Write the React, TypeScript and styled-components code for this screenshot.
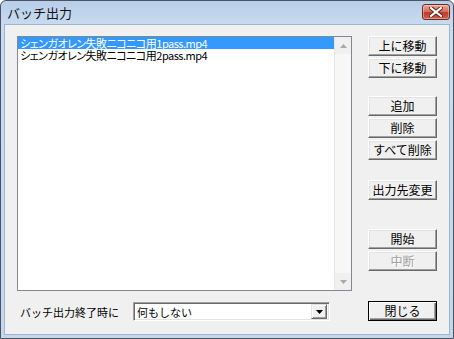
import styled, { createGlobalStyle, css } from "styled-components";

const GlobalStyle = createGlobalStyle`
  html, body {
    margin: 0;
    padding: 0;
    background: #ffffff;
  }
  * {
    box-sizing: border-box;
  }
`;

const FONT = `"Noto Sans CJK JP", "Noto Sans", sans-serif`;

const items = [
  "シェンガオレン失敗ニコニコ用1pass.mp4",
  "シェンガオレン失敗ニコニコ用2pass.mp4",
];

export default function App() {
  return (
    <>
      <GlobalStyle />
      <Window>
        <TitleBar>
          <Title>バッチ出力</Title>
          <CloseButton>
            <svg width="14" height="10" viewBox="0 0 14 10">
              <path
                d="M2 1 L12 9 M12 1 L2 9"
                stroke="#5a1a14"
                strokeWidth="4"
                strokeLinecap="square"
              />
              <path
                d="M2 1 L12 9 M12 1 L2 9"
                stroke="#ffffff"
                strokeWidth="2.2"
                strokeLinecap="square"
              />
            </svg>
          </CloseButton>
        </TitleBar>
        <Client>
          <LeftColumn>
            <ListBox>
              <ListItems>
                {items.map((item, i) => (
                  <ListItem key={item} $selected={i === 0}>
                    {item}
                  </ListItem>
                ))}
              </ListItems>
              <ScrollBar>
                <ScrollArrow>
                  <svg width="7" height="4" viewBox="0 0 7 4">
                    <path d="M3.5 0 L7 4 L0 4 Z" fill="#a8a8a8" />
                  </svg>
                </ScrollArrow>
                <ScrollTrack />
                <ScrollArrow>
                  <svg width="7" height="4" viewBox="0 0 7 4">
                    <path d="M0 0 L7 0 L3.5 4 Z" fill="#a8a8a8" />
                  </svg>
                </ScrollArrow>
              </ScrollBar>
            </ListBox>
            <BottomRow>
              <Label>バッチ出力終了時に</Label>
              <Combo>
                <ComboText>何もしない</ComboText>
                <ComboButton>
                  <svg width="7" height="4" viewBox="0 0 7 4">
                    <path d="M0 0 L7 0 L3.5 4 Z" fill="#000" />
                  </svg>
                </ComboButton>
              </Combo>
            </BottomRow>
          </LeftColumn>
          <RightColumn>
            <Group>
              <Button>上に移動</Button>
              <Button>下に移動</Button>
            </Group>
            <Group $top={18}>
              <Button>追加</Button>
              <Button>削除</Button>
              <Button>すべて削除</Button>
            </Group>
            <Group $top={20}>
              <Button>出力先変更</Button>
            </Group>
            <Group $top={29}>
              <Button>開始</Button>
              <Button disabled>中断</Button>
            </Group>
            <Group $top={30}>
              <Button $default>閉じる</Button>
            </Group>
          </RightColumn>
        </Client>
      </Window>
    </>
  );
}

const Window = styled.div`
  width: 454px;
  height: 339px;
  display: flex;
  flex-direction: column;
  border: 1px solid #4a5360;
  border-radius: 6px 6px 0 0;
  background: linear-gradient(to bottom, #b7cee9 0px, #c9dbf0 24px, #c3d7ee 100%);
  padding: 0 3px 3px 3px;
  font-family: ${FONT};
`;

const TitleBar = styled.div`
  height: 23px;
  display: flex;
  align-items: center;
  justify-content: space-between;
  padding: 0 0 0 3px;
`;

const Title = styled.div`
  font-size: 13px;
  color: #111;
  line-height: 1;
`;

const CloseButton = styled.div`
  width: 28px;
  height: 16px;
  margin-top: -2px;
  border: 1px solid #6e2a22;
  border-radius: 3px;
  background: linear-gradient(to bottom, #e8a79b 0%, #d7735f 45%, #c0392a 55%, #d1614d 100%);
  box-shadow: inset 0 0 0 1px rgba(255, 255, 255, 0.35);
  display: flex;
  align-items: center;
  justify-content: center;
`;

const Client = styled.div`
  flex: 1;
  background: #f0f0f0;
  border: 1px solid #9fb4cf;
  display: flex;
  padding: 11px 12px 0 12px;
`;

const LeftColumn = styled.div`
  width: 335px;
  display: flex;
  flex-direction: column;
`;

const ListBox = styled.div`
  height: 255px;
  background: #fff;
  border: 1px solid #828790;
  display: flex;
`;

const ListItems = styled.div`
  flex: 1;
  display: flex;
  flex-direction: column;
`;

const ListItem = styled.div<{ $selected?: boolean }>`
  height: 12px;
  line-height: 12px;
  font-size: 11px;
  letter-spacing: -0.5px;
  font-feature-settings: "palt";
  padding-left: 2px;
  white-space: nowrap;
  color: #000;
  ${(p) =>
    p.$selected &&
    css`
      background: #3399ff;
      color: #fff;
    `}
`;

const ScrollBar = styled.div`
  width: 17px;
  display: flex;
  flex-direction: column;
  background: #f4f4f4;
  border-left: 1px solid #e6e6e6;
`;

const ScrollArrow = styled.div`
  height: 17px;
  display: flex;
  align-items: center;
  justify-content: center;
  background: #f0f0f0;
`;

const ScrollTrack = styled.div`
  flex: 1;
  background: #f7f7f7;
`;

const BottomRow = styled.div`
  display: flex;
  align-items: center;
  margin-top: 11px;
  padding-left: 3px;
`;

const Label = styled.div`
  width: 113px;
  font-size: 11px;
  color: #000;
  white-space: nowrap;
`;

const Combo = styled.div`
  width: 197px;
  height: 19px;
  background: #fff;
  border-top: 1px solid #a0a0a0;
  border-left: 1px solid #a0a0a0;
  border-right: 1px solid #fff;
  border-bottom: 1px solid #fff;
  box-shadow: inset 1px 1px #696969, inset -1px -1px #e3e3e3;
  display: flex;
  align-items: center;
  padding: 2px;
`;

const ComboText = styled.div`
  flex: 1;
  font-size: 11px;
  color: #000;
  padding-left: 1px;
  white-space: nowrap;
`;

const ComboButton = styled.div`
  width: 16px;
  height: 15px;
  background: #f0f0f0;
  border-top: 1px solid #e3e3e3;
  border-left: 1px solid #e3e3e3;
  border-right: 1px solid #696969;
  border-bottom: 1px solid #696969;
  box-shadow: inset 1px 1px #fff, inset -1px -1px #a0a0a0;
  display: flex;
  align-items: center;
  justify-content: center;
`;

const RightColumn = styled.div`
  margin-left: 16px;
  display: flex;
  flex-direction: column;
`;

const Group = styled.div<{ $top?: number }>`
  display: flex;
  flex-direction: column;
  gap: 2px;
  margin-top: ${(p) => p.$top ?? 0}px;
`;

const Button = styled.button<{ $default?: boolean }>`
  width: 69px;
  height: 20px;
  padding: 0;
  margin: 0;
  font-family: ${FONT};
  font-size: 12px;
  line-height: 1;
  color: #000;
  background: #f0f0f0;
  border-top: 1px solid #fff;
  border-left: 1px solid #fff;
  border-right: 1px solid #696969;
  border-bottom: 1px solid #696969;
  box-shadow: inset -1px -1px #a0a0a0, inset 1px 1px #e3e3e3;
  display: flex;
  align-items: center;
  justify-content: center;
  ${(p) =>
    p.$default &&
    css`
      border: 1px solid #000;
      box-shadow: inset 1px 1px #fff, inset -1px -1px #696969, inset -2px -2px #a0a0a0;
    `}
  &:disabled {
    color: #a0a0a0;
    text-shadow: 1px 1px #fff;
  }
`;
